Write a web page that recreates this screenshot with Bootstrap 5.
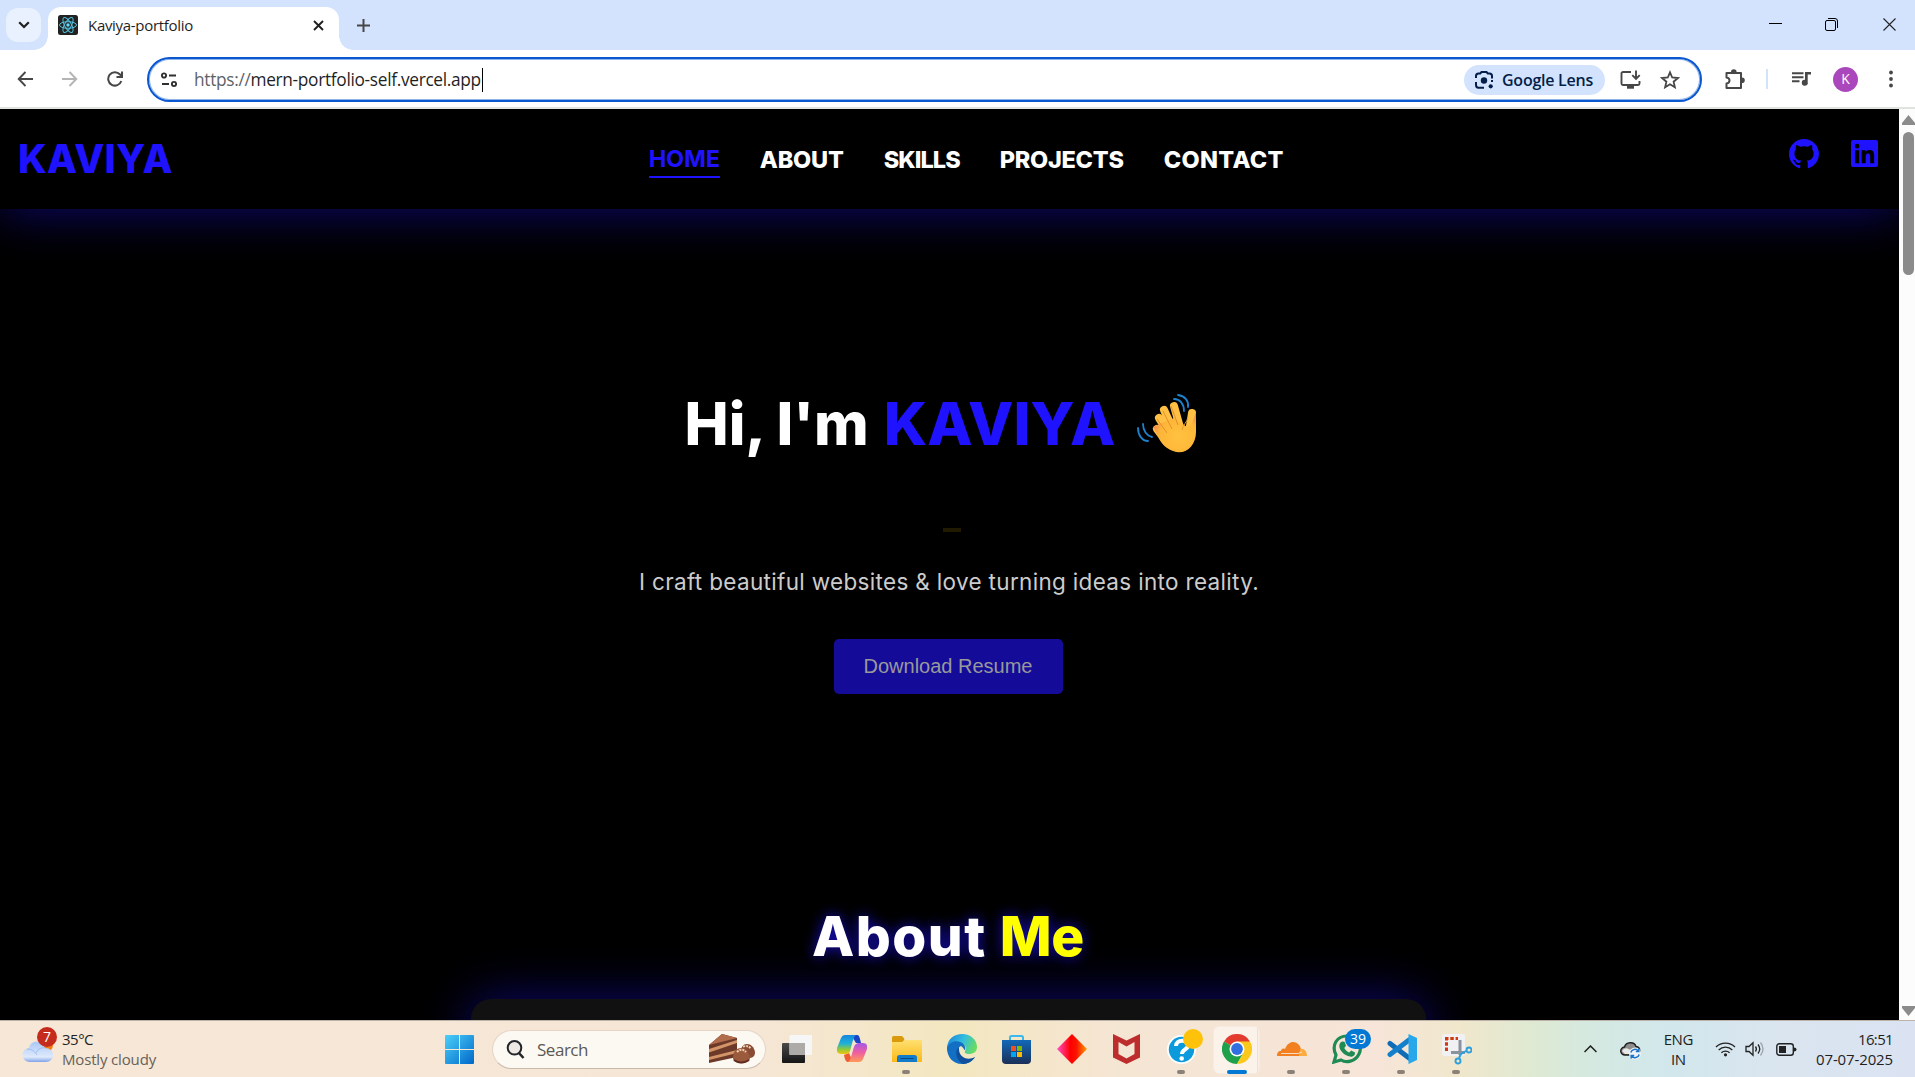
<!DOCTYPE html>
<html lang="en">
<head>
<meta charset="utf-8">
<title>Kaviya-portfolio</title>
<link href="https://cdn.jsdelivr.net/npm/bootstrap@5.3.0/dist/css/bootstrap.min.css" rel="stylesheet">
<style>
html,body{height:100%;overflow:hidden}
body{width:1915px;height:1077px;background:#000;font-family:"Open Sans","Noto Sans",sans-serif;color:#1f1f1f;line-height:1}
svg{display:block;flex:none}
span{white-space:nowrap}
.strip{height:50px;background:#d3e3fd;padding-left:6px}
.tabdrop{width:35px;height:34px;margin-top:8px;border-radius:12px;background:#e9f1fe}
.tabcard{width:291px;height:43px;margin:7px 0 0 7px;background:#fff;border-radius:13px 13px 0 0;padding:0 15.5px 7px 10px;position:relative}
.tabcard::before,.tabcard::after{content:"";position:absolute;bottom:0;width:14px;height:14px;background:radial-gradient(circle at 0 0,transparent 13.5px,#fff 14px)}
.tabcard::before{left:-14px}
.tabcard::after{right:-14px;background:radial-gradient(circle at 100% 0,transparent 13.5px,#fff 14px)}
.tabname{font-size:15px;margin-left:10px;letter-spacing:-.302px}
.newtab{margin:19px 0 0 18px}
.winbtns{padding:18px 19px 0 0;gap:44px}
.winbtns svg:nth-child(2){margin:0 1px 0 -1px}
.toolbar-row{height:59px;background:#fff;border-bottom:2px solid #e1e3e1;padding:7px 14px 0 17px}
.navbtns{width:130px;height:44px;gap:29px}
.omni{width:1555px;height:45px;border:2px solid #0b57d0;box-shadow:inset 0 0 0 1px #8fb4ea;border-radius:23px;padding:0 20px 0 12px}
.urltext{font-size:17.3px;margin-left:17px;letter-spacing:-.31px}
.caret{width:1px;height:24px;background:#000;margin-left:1px}
.lens{height:30px;width:141px;border-radius:15px;background:#d3e3fd;color:#041e49;padding-left:10px}
.lens span{font-size:16px;font-weight:600;margin-left:7px;letter-spacing:-.247px}
.install{margin:0 19px 0 15px}
.avatar{width:25px;height:25px;border-radius:50%;background:#ab47bc;color:#fff;font-size:14px;margin-left:22px}
.viewport{height:911px}
.page{width:1899px;background:#000;overflow:hidden;font-family:Inter,"Open Sans",sans-serif}
.sitebar{height:100px;background:#000;padding:0 20px 0 18px;box-shadow:0 2px 50px rgba(31,19,255,.44);position:relative}
.brandname{font-size:39px;font-weight:800;color:#1f13ff;letter-spacing:.3px;margin-top:-1px}
.menu{gap:40px;font-weight:800;font-size:23.5px;line-height:24px;color:#fff;margin:8px 0 0 476px}
.menu .now{color:#1f13ff;border-bottom:2px solid #1f13ff;padding-bottom:5px;margin-top:-1px;font-weight:700;letter-spacing:-.211px}
.socials{gap:32px;margin:-10px 1px 0 0}
.intro{padding-right:3px}
.greet{font-size:59px;font-weight:800;color:#fff;margin-top:184px;height:60px}
.greet svg{margin:2px 14px 0 22px}
.blue{color:#1f13ff}
.dash{width:18px;height:4px;background:#1f1a00;margin:75px 0 0 8px}
.tagline{font-size:22.5px;color:#ccc;margin:39px 0 0 2px;height:25px;letter-spacing:.325px}
.resume{width:229px;height:55px;border-radius:5px;background:#140c99;color:#999;font:20px "Liberation Sans",sans-serif;margin-top:43px}
.aboutme{font-size:55px;font-weight:800;color:#fff;margin-top:215px;height:60px;text-shadow:0 0 14px rgba(31,19,255,.75);position:relative;z-index:1}
.aboutcard{width:955px;height:60px;border-radius:20px 20px 0 0;background:#111;margin-top:30px;box-shadow:0 0 50px rgba(31,19,255,.44)}
.scroller{width:16px;background:#fcfcfc;padding:6px 0 4px 3px}
.thumb{width:11px;height:143px;border-radius:6px;background:#8b8b8b;margin-top:7px;margin-left:1px}
.taskbar{height:57px;border-top:1px solid #bdb2a8;background:linear-gradient(90deg,#f6e7d6 0,#f6e6d6 750px,#f3e7c6 900px,#f3e7c0 960px,#f5e5d3 1110px,#f6e5d8 1380px,#f0e7cc 1460px,#dfe9d2 1530px,#d5e9e0 1590px,#d1e7ec 1670px,#d9e5ef 1760px,#dbe3f2 1915px)}
.weather{width:432px;padding-left:22px}
.weather .wt{margin-left:9px;font-size:15px}
.slot{width:55px;height:56px;position:relative}
.slot.running::after{content:"";position:absolute;left:23px;bottom:3px;width:8px;height:4px;border-radius:2px;background:#8b8176}
.slot.current::after{left:18px;width:20px;background:#0078d4}
.slot.current::before{content:"";position:absolute;left:4px;top:5px;width:47px;height:48px;border-radius:6px;background:linear-gradient(90deg,#fbf2ea 43px,#efe0d4 43px,#efe0d4 44px,#faefe7 44px);border:1px solid #f5ebe2}
.slot svg{position:relative}
.find{width:274px;height:39px;border-radius:20px;background:#fcf8f2;border:1px solid #e6d5c5;border-bottom-color:#c9b9aa;margin:0 3px 0 5px;padding:0 10px 0 13px}
.find span{font-size:17px;color:#5c5955;margin:1px 0 0 12px;letter-spacing:-.474px}
.count{position:absolute;border-radius:10px;height:20px;color:#fff;font-size:14px}
.tray{padding-right:22px;font-size:15px}
.tray .two{gap:5px}
</style>
</head>
<body class="d-flex flex-column">
<div class="strip d-flex">
  <div class="tabdrop d-flex align-items-center justify-content-center"><svg width="12" height="8" viewBox="0 0 12 8" fill="none" stroke="#1f1f1f" stroke-width="2.2"><path d="M1.2 1.2 6 6l4.800-4.800"/></svg></div>
  <div class="tabcard d-flex align-items-center">
    <svg width="20" height="20" viewBox="0 0 20 20"><rect width="20" height="20" rx="2.500" fill="#222"/><g fill="none" stroke="#53c1de" stroke-width="1"><ellipse cx="10" cy="10" rx="8.500" ry="3.300"/><ellipse cx="10" cy="10" rx="8.500" ry="3.300" transform="rotate(60 10 10)"/><ellipse cx="10" cy="10" rx="8.500" ry="3.300" transform="rotate(120 10 10)"/></g><circle cx="10" cy="10" r="1.700" fill="#61dafb"/></svg>
    <span class="tabname">Kaviya-portfolio</span>
    <svg class="ms-auto" width="11" height="11" viewBox="0 0 11 11" stroke="#1f1f1f" stroke-width="1.900"><path d="M1 1l9 9M10 1l-9 9"/></svg>
  </div>
  <svg class="newtab" width="13" height="13" viewBox="0 0 13 13" stroke="#474747" stroke-width="2"><path d="M6.500 0v13M0 6.500h13"/></svg>
  <div class="winbtns ms-auto d-flex">
    <svg width="13" height="13" stroke="#000"><path d="M0 5.500h13"/></svg>
    <svg width="13" height="13" fill="none" stroke="#000"><rect x=".5" y="2.500" width="10" height="10" rx="1.500"/><path d="M3 .5h7a2.500 2.500 0 0 1 2.500 2.500v7"/></svg>
    <svg width="13" height="13" stroke="#222" stroke-width="1.100"><path d="M.5.5l12 12M12.500.5l-12 12"/></svg>
  </div>
</div>
<div class="toolbar-row d-flex">
  <div class="navbtns d-flex align-items-center">
    <svg width="16" height="16" viewBox="0 0 16 16" fill="none" stroke="#474747" stroke-width="1.900"><path d="M16 8H2M8.500 1 1.700 8l6.800 7"/></svg>
    <svg width="16" height="16" viewBox="0 0 16 16" fill="none" stroke="#b4b4b4" stroke-width="1.900"><path d="M0 8h14M7.500 1l6.800 7-6.800 7"/></svg>
    <svg width="16" height="16" viewBox="0 0 16 16" fill="none" stroke="#474747" stroke-width="2"><path d="M14.300 10A6.700 6.700 0 1 1 13 3.500L15 6M15 .5V6H9.500"/></svg>
  </div>
  <div class="omni d-flex align-items-center">
    <svg width="16" height="16" viewBox="0 0 16 16" fill="none" stroke="#303030" stroke-width="1.900"><circle cx="3" cy="3.500" r="2.100"/><path d="M8 3.500h7M1 12h7"/><circle cx="13" cy="12" r="2.100"/></svg>
    <span class="urltext"><span style="color:#5f6368">https://</span>mern-portfolio-self.vercel.app</span><i class="caret"></i>
    <div class="lens ms-auto d-flex align-items-center">
      <svg width="21" height="20" viewBox="0 0 21 20" fill="none" stroke="#041e49" stroke-width="2"><path d="M2 8V6a2.500 2.500 0 0 1 2.500-2.500h1.700L7.500 2h5l1.300 1.500h1.700A2.500 2.500 0 0 1 18 6v2.500M2 12v3a2.800 2.800 0 0 0 2.500 2.800H10M18 10v2"/><circle cx="10" cy="10.500" r="3.200" fill="#041e49" stroke="none"/><circle cx="16.700" cy="16.300" r="2.100" fill="#041e49" stroke="none"/></svg>
      <span>Google Lens</span>
    </div>
    <svg class="install" width="21" height="19" viewBox="0 0 21 19" fill="none" stroke="#474747" stroke-width="1.900"><path d="M11 2H3a1.500 1.500 0 0 0-1.500 1.500v10A1.500 1.500 0 0 0 3 15h15a1.500 1.500 0 0 0 1.500-1.500V11M16 .5v8M12.300 5.200 16 9l3.700-3.800"/><path d="M7 17.200h7" stroke-width="3"/></svg>
    <svg width="20" height="19" viewBox="0 0 20 19" fill="none" stroke="#474747" stroke-width="1.800" stroke-linejoin="miter"><path d="M10 2.300l2.200 5.200 5.700.5-4.300 3.700 1.300 5.600-4.900-3-4.900 3 1.300-5.600L2.100 8l5.700-.5z"/></svg>
  </div>
  <div class="d-flex align-items-center flex-grow-1" style="height:44px">
    <svg style="margin-left:22px" width="22" height="22" viewBox="0 0 22 22"><path d="M2.500 5h14.500v15H2.500v-4.500c4-.4 4-5.600 0-6z" fill="none" stroke="#474747" stroke-width="2" stroke-linejoin="round"/><path d="M7 4a2.800 2.800 0 0 1 5.600 0zM18 9.500a2.800 2.800 0 0 1 0 5.600z" fill="#474747"/></svg>
    <i style="width:2px;height:20px;background:#d3e3fd;margin-left:20px"></i>
    <svg style="margin-left:24px" width="19" height="16" viewBox="0 0 19 16" fill="#474747"><path d="M0 1.300h11.500v2H0zM0 5.300h11.500v2H0zM0 9.300h7.500v2H0z"/><path d="M13 1h6v2.500h-3.300V11a3 3 0 1 1-2.700-2.300z"/></svg>
    <div class="avatar d-flex align-items-center justify-content-center">K</div>
    <svg style="margin-left:31px" width="4" height="18" fill="#474747"><circle cx="2" cy="2.500" r="1.900"/><circle cx="2" cy="9" r="1.900"/><circle cx="2" cy="15.500" r="1.900"/></svg>
  </div>
</div>
<div class="viewport d-flex">
  <main class="page">
    <nav class="sitebar d-flex align-items-center">
      <span class="brandname">KAVIYA</span>
      <div class="menu d-flex align-items-start">
        <span class="now">HOME</span><span style="letter-spacing:-.172px">ABOUT</span><span style="letter-spacing:-.945px">SKILLS</span><span style="letter-spacing:-.268px">PROJECTS</span><span style="letter-spacing:.313px">CONTACT</span>
      </div>
      <div class="socials d-flex ms-auto">
        <svg width="30" height="30" viewBox="0 0 16 16" fill="#1f13ff"><path d="M8 0C3.580 0 0 3.580 0 8c0 3.540 2.290 6.530 5.470 7.590.4.070.55-.17.55-.38 0-.19-.01-.82-.01-1.490-2.010.37-2.530-.49-2.690-.94-.09-.23-.48-.94-.82-1.130-.28-.15-.68-.52-.01-.53.63-.01 1.080.58 1.230.82.72 1.210 1.870.87 2.330.66.07-.52.28-.87.51-1.070-1.780-.2-3.640-.89-3.640-3.950 0-.87.31-1.590.82-2.150-.08-.2-.36-1.020.08-2.120 0 0 .67-.21 2.200.82.64-.18 1.320-.27 2-.27s1.360.09 2 .27c1.530-1.040 2.200-.82 2.200-.82.44 1.100.16 1.920.08 2.120.51.56.82 1.270.82 2.150 0 3.070-1.870 3.750-3.650 3.950.29.25.54.73.54 1.480 0 1.070-.01 1.930-.01 2.200 0 .21.15.46.55.38A8.010 8.010 0 0 0 16 8c0-4.420-3.580-8-8-8z"/></svg>
        <svg width="27" height="27" viewBox="0 0 448 448" style="margin-top:1px" fill="#1f13ff"><path d="M416 0H31.900C14.300 0 0 14.500 0 32.300v383.400C0 433.500 14.300 448 31.900 448H416c17.600 0 32-14.500 32-32.300V32.300C448 14.500 433.600 0 416 0zM135.400 384H69V170.200h66.500V384zM102.200 141a38.500 38.500 0 1 1 0-77 38.500 38.500 0 0 1 0 77zM384.300 384h-66.400V280c0-24.800-.5-56.700-34.500-56.700-34.600 0-39.900 27-39.900 54.900V384h-66.400V170.200h63.700v29.200h.9c8.900-16.800 30.600-34.500 62.900-34.500 67.200 0 79.700 44.300 79.700 101.900z"/></svg>
      </div>
    </nav>
    <section class="intro d-flex flex-column align-items-center">
      <div class="greet d-flex align-items-center"><span style="letter-spacing:-.05px">Hi, I'm</span><span class="blue" style="margin-left:15px;letter-spacing:.05px">KAVIYA</span>
        <svg width="60" height="62" viewBox="0 0 60 62"><defs><radialGradient id="hand" cx=".6" cy=".6" r=".65"><stop offset="0" stop-color="#ffc23f"/><stop offset=".7" stop-color="#ffb638"/><stop offset="1" stop-color="#f4874f"/></radialGradient></defs>
        <g stroke="#ffc043" stroke-width="8" stroke-linecap="round" fill="none"><path d="M20 36 29 48M22 25l12 19M27 17l11 24M37 13l7 25M55 20l-3 19"/></g>
        <path d="M16 34c6 8 6 19 20 24 12 5 23-5 23-19V20l-5 12-4 2-13-9z" fill="url(#hand)"/>
        <path d="M20 26l10 14M26 18l9 18M34 13l7 19" stroke="#e3912c" fill="none"/><path d="M51 24c-1 6-5 7-6 13" stroke="#e8992f" fill="none"/>
        <g stroke="#1d83cf" stroke-width="1.800" fill="none" stroke-linecap="round"><path d="M41 2c7 1 11 6 10 12M37 6c6 0 10 5 10 12M6 31c0 7 4 12 9 13M1 35c0 7 4 13 10 13"/></g></svg>
      </div>
      <div class="dash"></div>
      <span class="tagline">I craft beautiful websites &amp; love turning ideas into reality.</span>
      <div class="resume d-flex align-items-center justify-content-center"><span>Download Resume</span></div>
      <div class="aboutme d-flex"><span style="letter-spacing:1.5px">About</span><span style="color:#ff0;margin-left:13px;letter-spacing:-.3px">Me</span></div>
      <div class="aboutcard"></div>
    </section>
  </main>
  <div class="scroller d-flex flex-column">
    <svg width="13" height="10" fill="#8b8b8b"><path d="M6.500 0 13 8v2H0V8z"/></svg><div class="thumb"></div>
    <svg class="mt-auto" width="13" height="10" fill="#8b8b8b"><path d="M6.500 10 13 2V0H0v2z"/></svg>
  </div>
</div>
<div class="taskbar d-flex align-items-center">
  <div class="weather d-flex align-items-center">
    <div class="position-relative"><svg width="31" height="26" viewBox="0 0 31 26" style="margin-top:2px"><defs><linearGradient id="cl" x2="0" y2="1"><stop stop-color="#a9c8f5"/><stop offset=".75" stop-color="#dfeafc"/><stop offset="1" stop-color="#7fa3e8"/></linearGradient></defs><circle cx="24" cy="8" r="7" fill="#f57c12"/><path d="M8 25a7 7 0 0 1-1-14C8 6 12 4 16 5c4 0 6 3 7 6 5 0 8 3 8 7s-3 7-7 7z" fill="url(#cl)"/><path d="M5 12c5 0 7 2 10 6M14 16c2-4 5-6 10-5" stroke="#86a8e6" fill="none" opacity=".6"/></svg>
    <span class="count d-flex align-items-center justify-content-center" style="background:#c42b1c;width:20px;left:15px;top:-8px">7</span></div>
    <div class="wt d-flex flex-column gap-1"><span style="letter-spacing:-.508px">35°C</span><span style="color:#68615a;letter-spacing:-.161px;margin-top:1px">Mostly cloudy</span></div>
  </div>
  <div class="slot d-flex align-items-center justify-content-center"><svg width="29" height="29"><defs><linearGradient id="w" x2="1" y2="1"><stop stop-color="#4cd0fb"/><stop offset="1" stop-color="#0067c8"/></linearGradient></defs><rect width="29" height="29" rx="1" fill="url(#w)"/><path d="M14.500 0v29M0 14.500h29" stroke="#f6e7d6"/></svg></div>
  <div class="find d-flex align-items-center">
    <svg width="19" height="19" viewBox="0 0 19 19" fill="none" stroke="#22262b" stroke-width="2"><circle cx="8.500" cy="7.800" r="6.800" fill="#eee9e4"/><path d="M12.500 12.500 17.500 18" stroke-width="2.600"/></svg>
    <span>Search</span>
    <svg class="ms-auto" width="46" height="30" viewBox="0 0 46 30"><path d="M0 11 13 0l15 4v19L0 29z" fill="#6d3a29"/><path d="M0 11 13 0l15 4z" fill="#b26d4c"/><path d="M0 15l28-9v3L0 18.500zM0 23l28-7v3L0 26z" fill="#d39468"/><path d="M32 18c0-5 2-8 6-8s7 3 8 8c0 6-4 6-8 6z" fill="#8a4b34"/><path d="M24 24c0-6 3-10 8-10s8 4 9 10c0 7-17 7-17 0z" fill="#9c5a3d"/><path d="M28 18c3-3 6-3 9 0M34 12.500c4-1 6 0 8 2" stroke="#f0d3b4" stroke-width="2" stroke-dasharray="2 1" fill="none"/><path d="M25 26q7 5 15 0" stroke="#5e2d20" fill="none" stroke-width="2"/></svg>
  </div>
  <div class="slot d-flex align-items-center justify-content-center"><svg width="30" height="30" viewBox="0 0 30 30"><defs><linearGradient id="tv" x2="0" y2="1"><stop stop-color="#4a4a4a"/><stop offset="1" stop-color="#151515"/></linearGradient></defs><rect y="9" width="23" height="20" rx="1" fill="url(#tv)"/><rect x="7.500" y="1" width="22.500" height="20" rx="1" fill="#f6f6f6"/><rect x="7.500" y="9" width="15.500" height="12" fill="#adaaa7"/></svg></div>
  <div class="slot d-flex align-items-center justify-content-center"><svg width="30" height="28" viewBox="0 0 30 28"><defs><linearGradient id="c1" x2="0" y2="1"><stop stop-color="#1686e0"/><stop offset=".45" stop-color="#1fb0d8"/><stop offset=".75" stop-color="#8fc93a"/><stop offset="1" stop-color="#f2c40f"/></linearGradient><linearGradient id="c2" x2="0" y2="1"><stop stop-color="#a559e8"/><stop offset=".5" stop-color="#ee5fa2"/><stop offset="1" stop-color="#ff9a55"/></linearGradient></defs><path d="M14 0h6c2 0 2 1 3 4l1 4h-5z" fill="#1b45c4"/><path d="M16 27h-5c-2 0-3-2-4-7l5-2z" fill="#ef5b34"/><path d="M8 0h11c-3 2-4 10-6 16-1 3-3 3-5 3H4c-3 0-5-2-4-6L4 3c1-2 2-3 4-3z" fill="url(#c1)"/><path d="M22 27H11c3-2 4-9 6-15 1-3 3-4 5-4h4c3 0 5 2 4 6l-4 10c-1 2-2 3-4 3z" fill="url(#c2)"/></svg></div>
  <div class="slot running d-flex align-items-center justify-content-center"><svg width="30" height="27" viewBox="0 0 30 27"><defs><linearGradient id="fo" x2="0" y2="1"><stop stop-color="#ffdf71"/><stop offset="1" stop-color="#fbb916"/></linearGradient></defs><path d="M0 1.500Q0 0 1.500 0H10l2.500 3-2 4H0z" fill="#d99a0c"/><path d="M0 6h10l3-2h15.500Q30 4 30 5.500V26H0z" fill="url(#fo)"/><path d="M5 26v-4.500a2.500 2.500 0 0 1 2.500-2.500h15a2.500 2.500 0 0 1 2.500 2.500V26z" fill="#147bc9"/><path d="M8.500 22.500h13" stroke="#064d85"/></svg></div>
  <div class="slot d-flex align-items-center justify-content-center"><svg width="30" height="30" viewBox="0 0 30 30"><defs><linearGradient id="e1" x2="1" y2=".4"><stop stop-color="#1680d8"/><stop offset=".55" stop-color="#34bde0"/><stop offset="1" stop-color="#66dc62"/></linearGradient></defs><path d="M0 13C1 5 7 0 15 0c9 0 15 6 15 13 0 5-4 7-8 7-3 0-5-1-4-3 2-3 0-7-4-7C8 10 3 17 6 24 2 21 0 17 0 13z" fill="url(#e1)"/><path d="M0 14C2 8 8 6 13 8c4 1 6 5 5 8-1 0-1-2-4-4-4 1-4 8 0 11 4 4 10 3 14 0-3 5-8 7-13 7C6 30 0 23 0 14z" fill="#126fc4"/><path d="M12 13c-5 4-3 13 4 17 5 0 9-3 12-7-7 4-17 1-16-10z" fill="#10509c"/></svg></div>
  <div class="slot d-flex align-items-center justify-content-center"><svg width="29" height="29" viewBox="0 0 29 29"><defs><linearGradient id="st" x2="0" y2="1"><stop stop-color="#1269b8"/><stop offset="1" stop-color="#1b2f57"/></linearGradient></defs><path d="M8 6V2.500Q8 1 9.500 1h10Q21 1 21 2.500V6" fill="none" stroke="#38b9f0" stroke-width="2"/><path d="M0 5h29v20a4 4 0 0 1-4 4H4a4 4 0 0 1-4-4z" fill="url(#st)"/><path d="M9 11h5v5H9z" fill="#f25022"/><path d="M15 11h5v5h-5z" fill="#7fba00"/><path d="M9 17h5v5H9z" fill="#00a4ef"/><path d="M15 17h5v5h-5z" fill="#ffb900"/></svg></div>
  <div class="slot d-flex align-items-center justify-content-center"><svg width="30" height="30"><defs><linearGradient id="di"><stop stop-color="#ff4fc8"/><stop offset=".45" stop-color="#f00"/><stop offset=".65" stop-color="#f91500"/><stop offset="1" stop-color="#ff9d00"/></linearGradient></defs><path d="M15 0l15 15-15 15L0 15z" fill="url(#di)"/></svg></div>
  <div class="slot d-flex align-items-center justify-content-center"><svg width="27" height="30" viewBox="0 0 27 30"><path d="M0 0l13.500 6.500L27 0v23.500L13.500 30 0 23.500zM5.500 8v12l8 4.500 8-4.500V8l-8 4.500z" fill="#be2d2d" fill-rule="evenodd"/></svg></div>
  <div class="slot running d-flex align-items-center justify-content-center"><svg width="29" height="29"><circle cx="14.500" cy="14.500" r="14.500" fill="#fff"/><circle cx="14.500" cy="14.500" r="12.700" fill="#0b9bdc"/><path d="M9 11c0-7 12-7 12-.5 0 4-6 4-6 8.500" stroke="#fff" stroke-width="4" fill="none"/><circle cx="14.700" cy="23.500" r="2.300" fill="#fff"/></svg><span class="count" style="width:20px;background:#ffc20a;left:29px;top:8px"></span></div>
  <div class="slot running current d-flex align-items-center justify-content-center"><svg width="30" height="30" viewBox="0 0 30 30"><path d="M15 15 2 7.500A15 15 0 0 1 28 7.500z" fill="#e33b2e"/><path d="M2 7.500A15 15 0 0 0 15 30l6.500-11.200L15 15z" fill="#1fa04a"/><path d="M28 7.500H15l6.500 11.300L15 30A15 15 0 0 0 28 7.500z" fill="#fcc91b"/><circle cx="15" cy="15" r="7.500" fill="#fff"/><circle cx="15" cy="15" r="5.900" fill="#2f6fe0"/></svg></div>
  <div class="slot running d-flex align-items-center justify-content-center"><svg width="30" height="14" viewBox="0 0 30 14"><path d="M23 14H0c0-3 1-5 4-5 0-2 2-3 4-2C10 2 13 0 16 0c4 0 7 3 8 7z" fill="#f38020"/><path d="M30 14h-8l1-7c4-1 7 2 7 7z" fill="#fbad41"/><path d="M4 11.500h17l4-1.500" stroke="#f6e5d8" fill="none" stroke-width=".9"/></svg></div>
  <div class="slot running d-flex align-items-center justify-content-center"><svg width="30" height="30" viewBox="0 0 30 30"><path d="M2 28l2-7C-1 11 5 2 15 2s16 10 12 18c-4 8-13 9-18 6z" fill="none" stroke="#1f8a54" stroke-width="3.200"/><path d="M10 7.500l2.500.3 1.500 4-1.700 2.200c1.200 2.200 2.700 3.500 4.900 4.500l2-2.100 3.800 2c.3 3-2.500 4.600-5 4.200C12 21.500 7.500 16.500 7.300 12c0-2 1-4 2.700-4.500z" fill="#1f8a54"/></svg><span class="count d-flex align-items-center justify-content-center" style="width:26px;background:#0078d4;left:26px;top:8px">39</span></div>
  <div class="slot running d-flex align-items-center justify-content-center"><svg width="30" height="30" viewBox="0 0 30 30"><path d="M3 9.500l19 14.500" stroke="#0f6cb5" stroke-width="5" fill="none" stroke-linecap="round"/><path d="M3 20.500 22 6" stroke="#1480cc" stroke-width="5" fill="none" stroke-linecap="round"/><path d="M21.500 0 30 4v22l-8.500 4z" fill="#28a8ea"/></svg></div>
  <div class="slot running d-flex align-items-center justify-content-center"><svg width="30" height="31" viewBox="0 0 30 31"><rect width="23" height="22" rx="2" fill="#f1f0f2"/><path d="M3 4.500h13M4.500 3v14" stroke="#d13b12" stroke-width="3" stroke-dasharray="3.500 1.800"/><path d="M18 6v15M9 18.500h14" stroke="#8a929b" stroke-width="3"/><g fill="none" stroke="#2e9fdd" stroke-width="1.900"><circle cx="27" cy="16" r="2.500"/><circle cx="16" cy="27" r="2.500"/><path d="M17 24l2-4 5-3"/></g></svg></div>
  <div class="tray d-flex align-items-center ms-auto">
    <svg width="13" height="8" fill="none" stroke="#1f1f1f" stroke-width="1.500"><path d="M.5 7 6.500 1l6 6"/></svg>
    <svg style="margin:2px 0 0 23px" width="21" height="19" viewBox="0 0 21 19"><path d="M5 14a4 4 0 0 1-.5-8C6 1 14 0 16 5.500c5 .5 5 8 0 8.500z" fill="#8d8d8d" stroke="#1d1d1d" stroke-width="1.400"/><path d="M2 10c3-4 6-3 9 0l5 3H5z" fill="#e8e8e8"/><circle cx="15" cy="12.500" r="6" fill="#eef4f8"/><path d="M10.800 11.500a4.300 4.300 0 0 1 7.500-1.500M19.200 13.500a4.300 4.300 0 0 1-7.500 1.500M18.800 7.500v3h-3M11.200 17.500v-3h3" fill="none" stroke="#1b74c9" stroke-width="1.500"/></svg>
    <div class="two d-flex flex-column align-items-center" style="margin-left:23px;letter-spacing:-.4px"><span>ENG</span><span>IN</span></div>
    <svg style="margin-left:22px" width="21" height="16" viewBox="0 0 21 16" fill="none" stroke="#222" stroke-width="1.300"><path d="M1 6a13.500 13.500 0 0 1 19 0M3.700 9a9.700 9.700 0 0 1 13.600 0M6.400 11.800a5.900 5.900 0 0 1 8.200 0"/><circle cx="10.500" cy="13.800" r="1.600" fill="#222" stroke="none"/></svg>
    <svg style="margin-left:9px" width="20" height="16" viewBox="0 0 20 16" fill="none" stroke="#222" stroke-width="1.300"><path d="M1 5.500h3L8 1.800v12.400L4 10.500H1z"/><path d="M10.500 5.500q1.800 2.500 0 5M13 3.500q3.500 4.500 0 9"/><path d="M15.500 1.500q5 6.500 0 13" stroke="#9aa4ad"/></svg>
    <svg style="margin-left:11px" width="21" height="13" viewBox="0 0 21 13"><rect x=".8" y=".8" width="16.500" height="11.400" rx="2.500" fill="none" stroke="#222" stroke-width="1.400"/><rect x="3" y="3" width="7" height="7" fill="#222"/><path d="M18 4.500q2.500 0 2.500 2t-2.500 2z" fill="#222"/></svg>
    <div class="two d-flex flex-column align-items-end" style="margin-left:19px"><span style="letter-spacing:-.65px">16:51</span><span style="letter-spacing:-.128px">07-07-2025</span></div>
  </div>
</div>
<script src="https://cdn.jsdelivr.net/npm/bootstrap@5.3.0/dist/js/bootstrap.bundle.min.js"></script>
</body>
</html>
